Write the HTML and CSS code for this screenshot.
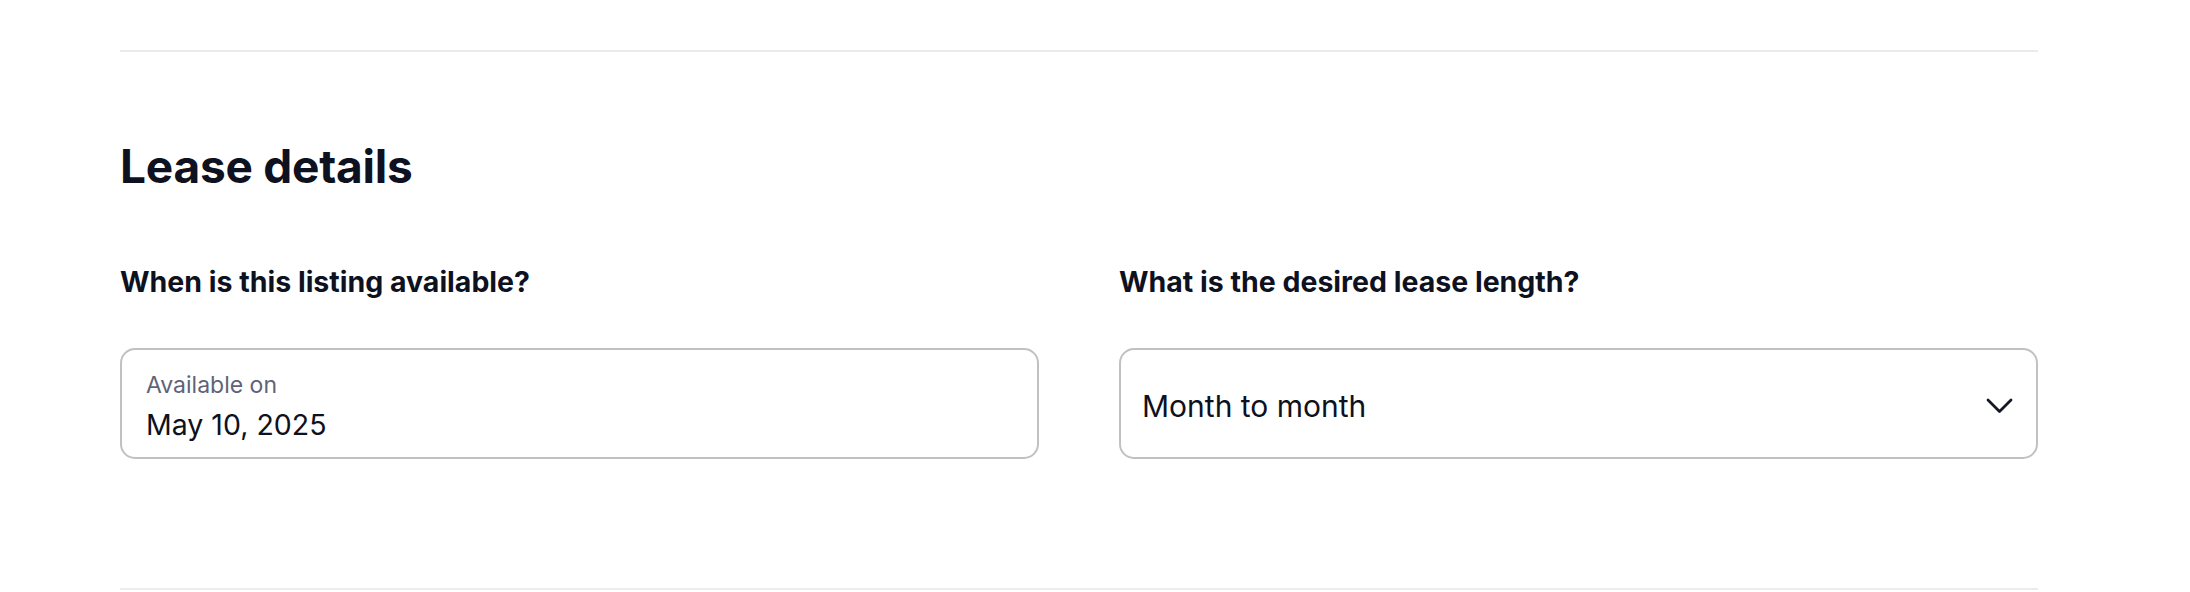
FILE: index.html
```html
<!DOCTYPE html>
<html>
<head>
  <title>Lease details</title>
  <link rel="stylesheet" href="styles.css">
</head>
<body>
  <div class="page">
    <div class="rule"></div>

    <h2 class="section-title">Lease details</h2>

    <div class="fields">
      <div class="field">
        <label class="question">When is this listing available?</label>
        <div class="box date-box">
          <span class="date-label">Available on</span>
          <span class="date-value">May 10, 2025</span>
        </div>
      </div>

      <div class="field">
        <label class="question">What is the desired lease length?</label>
        <div class="box select-box">
          <span class="select-value">Month to month</span>
          <svg class="chevron" width="27" height="16" viewBox="0 0 27 16">
            <path d="M2 2 L13.5 13.5 L25 2" fill="none" stroke="#141824" stroke-width="2.8" stroke-linecap="round" stroke-linejoin="round"/>
          </svg>
        </div>
      </div>
    </div>

    <div class="rule bottom"></div>
  </div>
</body>
</html>
```

FILE: styles.css
```css
body {
  margin: 0;
  background-color: #ffffff;
  font-family: Inter, "Noto Sans", sans-serif;
  color: #0e1120;
}

.page {
  margin: 0 152px 0 120px;
  padding-top: 50px;
}

.rule {
  height: 2px;
  background-color: #ebebeb;
}

.rule.bottom {
  margin-top: 129px;
  background-color: #ececea;
}

.section-title {
  margin: 86px 0 0;
  font-size: 46px;
  line-height: 56px;
  font-weight: 700;
  letter-spacing: -0.005em;
}

.fields {
  display: grid;
  grid-template-columns: 1fr 1fr;
  column-gap: 80px;
  margin-top: 71px;
}

.field {
  display: flex;
  flex-direction: column;
}

.question {
  font-size: 28.5px;
  line-height: 34px;
  font-weight: 700;
  margin-bottom: 49px;
}

.box {
  box-sizing: border-box;
  height: 111px;
  border: 2px solid #c0c0c5;
  border-radius: 15px;
  background-color: #ffffff;
}

.date-box {
  display: flex;
  flex-direction: column;
  padding: 21px 23px 0 24px;
}

.date-label {
  font-size: 23px;
  line-height: 28px;
  color: #5e6377;
}

.date-value {
  margin-top: 9px;
  font-size: 28.5px;
  line-height: 34px;
  color: #0e1120;
}

.select-box {
  display: flex;
  align-items: center;
  justify-content: space-between;
  padding: 4px 23px 0 21px;
}

.select-value {
  font-size: 30px;
  line-height: 36px;
}

.chevron {
  display: block;
}
```
